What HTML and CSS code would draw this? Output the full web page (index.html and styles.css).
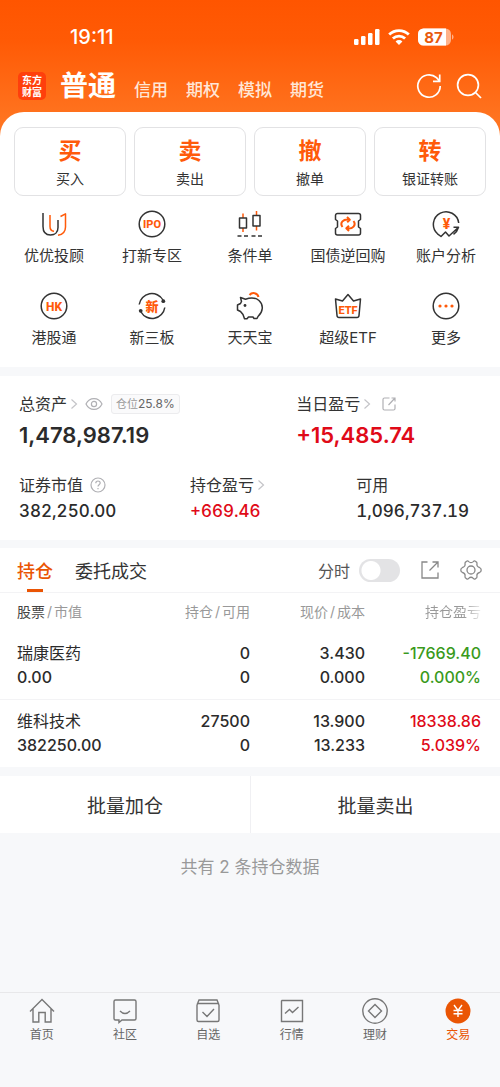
FILE: index.html
```html
<!DOCTYPE html>
<html lang="zh-CN">
<head>
<meta charset="utf-8">
<meta name="viewport" content="width=device-width, initial-scale=1">
<title>交易</title>
<link rel="stylesheet" href="styles.css">
</head>
<body>
<div class="app">
  <header class="top">
    <div class="status">
      <span class="status-time">19:11</span>
      <div class="status-icons">
        <svg width="26" height="18" viewBox="0 0 26 18" fill="#fff"><rect x="0" y="11" width="4.5" height="6" rx="1.2"/><rect x="7" y="8" width="4.5" height="9" rx="1.2"/><rect x="14" y="5" width="4.5" height="12" rx="1.2"/><rect x="21" y="1" width="4.5" height="16" rx="1.2"/></svg>
        <svg width="22" height="18" viewBox="0 0 22 18" fill="none" stroke="#fff" stroke-width="2.8"><path d="M1.2 6.6a14 14 0 0 1 19.6 0"/><path d="M4.9 10.6a8.8 8.8 0 0 1 12.2 0"/><path d="M11 17 7.6 13.5a4.8 4.8 0 0 1 6.8 0z" fill="#fff" stroke="none"/></svg>
        <svg class="battery" width="36" height="18" viewBox="0 0 36 18"><rect width="33" height="17" y=".5" rx="5.5" fill="#ffb28a"/><path d="M5.5.5H28v17H5.5A5.5 5.5 0 0 1 0 12V6A5.5 5.5 0 0 1 5.5.5z" fill="#fff"/><path d="M34 6.500c2 .6 2 4.400 0 5z" fill="#ffb28a"/><text x="15.500" y="14.500" text-anchor="middle" class="battery-text">87</text></svg>
      </div>
    </div>
    <div class="bar">
      <div class="logo"><span>东方</span><span>财富</span></div>
      <nav class="accounts">
        <a class="account account-on" href="#normal">普通</a>
        <a class="account" href="#credit">信用</a>
        <a class="account" href="#option">期权</a>
        <a class="account" href="#demo">模拟</a>
        <a class="account" href="#futures">期货</a>
      </nav>
      <button class="icon-btn" aria-label="刷新"><svg width="26" height="26" viewBox="0 0 26 26" fill="none" stroke="#fff" stroke-width="1.7"><path d="M24.200 13A11.200 11.200 0 1 1 20.500 4.700L23.500 8M23.700 1.500V8.300H17"/></svg></button>
      <button class="icon-btn" aria-label="搜索"><svg width="26" height="26" viewBox="0 0 26 26" fill="none" stroke="#fff" stroke-width="1.7"><circle cx="12" cy="12" r="10.400"/><path d="M19.500 19.500 25 25"/></svg></button>
    </div>
  </header>

  <main>
    <section class="panel">
      <div class="actions">
        <button class="action"><b>买</b><span>买入</span></button>
        <button class="action"><b>卖</b><span>卖出</span></button>
        <button class="action"><b>撤</b><span>撤单</span></button>
        <button class="action"><b>转</b><span>银证转账</span></button>
      </div>
      <div class="tools">
        <a class="tool" href="#advisor"><svg class="tool-icon" viewBox="0 0 28 28"><path class="dk" d="M3 3V16.500C3 22 6 25 10.500 25S18 22 18 17.500V10"/><path class="or" d="M10 5V16.500C10 19.500 11.500 21 14 21.300M20.500 6.500 25.500 3.800V17C25.500 21.500 22.500 24.500 18 25.300"/></svg>优优投顾</a>
        <a class="tool" href="#ipo"><svg class="tool-icon" viewBox="0 0 28 28"><circle class="dk" cx="14" cy="14" r="12.800"/><text class="glyph" x="14" y="18" font-size="11">IPO</text></svg>打新专区</a>
        <a class="tool" href="#condition"><svg class="tool-icon" viewBox="0 0 28 28"><path class="or" d="M7 3.500V8M7 18V22M20.500 1V6M20.500 16V20.500"/><rect class="dk" x="3.500" y="8" width="7" height="10"/><rect class="dk" x="17" y="5.500" width="7" height="10.500"/><path class="dk" d="M1.500 26h4M8 26h4M15.500 26h4M22 26h4"/></svg>条件单</a>
        <a class="tool" href="#repo"><svg class="tool-icon" viewBox="0 0 28 28"><path class="dk" d="M3.500 3.500H24.500A2 2 0 0 1 26.500 5.500V9.500L24.500 11V17L26.500 18.500V23A2 2 0 0 1 24.500 25H3.500A2 2 0 0 1 1.500 23V18.500L3.500 17V11L1.500 9.500V5.500A2 2 0 0 1 3.500 3.500z"/><path class="or thick" d="M8.500 17C5.500 13 9 8.500 15.500 9.700M13 7 15.800 9.700 13.200 12.200M19.500 11C22.500 15 19 19.500 12.500 18.300M15 21 12.300 18.300 15 15.800"/></svg>国债逆回购</a>
        <a class="tool" href="#analysis"><svg class="tool-icon" viewBox="0 0 28 28"><path class="dk" d="M26.700 13A12.700 12.700 0 1 0 5.500 23.800L9 26.500 13.500 22 17 26 26.500 17.300H21.500M26.500 17.300C25.800 20 24 22.500 21.500 24.300"/><text class="glyph" x="14.500" y="18.500" font-size="14">¥</text></svg>账户分析</a>
        <a class="tool" href="#hk"><svg class="tool-icon" viewBox="0 0 28 28"><circle class="dk" cx="14" cy="14" r="12.800"/><text class="glyph" x="14" y="18.500" font-size="12">HK</text></svg>港股通</a>
        <a class="tool" href="#neeq"><svg class="tool-icon" viewBox="0 0 28 28"><path class="dk" d="M1.200 12.500A12.800 12.800 0 0 1 25 8M26.800 15.500A12.800 12.800 0 0 1 3 20"/><circle cx="25.300" cy="9.200" r="1.900" fill="#333"/><circle cx="2.700" cy="18.800" r="1.900" fill="#333"/><text class="glyph" x="14" y="18.500" font-size="13">新</text></svg>新三板</a>
        <a class="tool" href="#daily"><svg class="tool-icon" viewBox="0 0 28 28"><path class="dk" d="M4.500 5.500 9.500 7.200C14 5.500 19.500 5.500 23 8.500 28 13 27 20 22 24.500L21 26.500H18L17 25H12.500L11 26.800H8.500L7 22.500 4.500 19.500 1.500 18V13L4.500 11.500 5.500 9.500z"/><path class="or thick" d="M13.500 3C16 0 21.500.5 22.500 5"/><circle cx="9" cy="13.500" r="1.400" fill="#333"/></svg>天天宝</a>
        <a class="tool" href="#etf"><svg class="tool-icon" viewBox="0 0 28 28"><path class="dk" d="M1.500 7 8.500 9 14 2.500 19.500 9 26.500 7 25 23.500Q24.800 25.500 23 25.500H5Q3.200 25.500 3 23.500z"/><text class="glyph" x="14" y="21.500" font-size="11">ETF</text></svg>超级ETF</a>
        <a class="tool" href="#more"><svg class="tool-icon" viewBox="0 0 28 28"><circle class="dk" cx="14" cy="14" r="12.800"/><g fill="#ff5a0a"><circle cx="8" cy="14" r="1.600"/><circle cx="14" cy="14" r="1.600"/><circle cx="20" cy="14" r="1.600"/></g></svg>更多</a>
      </div>
    </section>

    <section class="assets">
      <div class="asset-row asset-main">
        <div class="asset">
          <div class="asset-label">总资产<svg class="chev" viewBox="0 0 8 12"><path d="M1.500 1.500 6.500 6 1.500 10.500"/></svg>
            <button class="mini-btn eye" aria-label="隐藏资产"><svg width="18" height="14" viewBox="0 0 18 14"><path d="M1 7C4.500-.2 13.500-.2 17 7 13.500 14.200 4.500 14.200 1 7z"/><circle cx="9" cy="7" r="2.600"/></svg></button>
            <span class="badge">仓位<span class="badge-num">25.8%</span></span></div>
          <div class="num num-lg">1,478,987.19</div>
        </div>
        <div class="asset">
          <div class="asset-label">当日盈亏<svg class="chev" viewBox="0 0 8 12"><path d="M1.500 1.500 6.500 6 1.500 10.500"/></svg>
            <button class="mini-btn share" aria-label="分享"><svg width="14" height="14" viewBox="0 0 14 14"><path d="M7.500 1H2.500Q1 1 1 2.500V11.500Q1 13 2.500 13H11.500Q13 13 13 11.500V7.500M9.500 1H13V4.500M13 1 6.500 8"/></svg></button></div>
          <div class="num num-lg up">+15,485.74</div>
        </div>
      </div>
      <div class="asset-row asset-sub">
        <div class="asset">
          <div class="asset-label">证券市值
            <button class="mini-btn help" aria-label="说明"><svg width="16" height="16" viewBox="0 0 16 16"><circle cx="8" cy="8" r="7"/><path d="M5.800 6.200C5.800 3.300 10.200 3.300 10.200 6.100 10.200 7.800 8 7.800 8 9.600M8 11v1.200"/></svg></button></div>
          <div class="num num-md">382,250.00</div>
        </div>
        <div class="asset">
          <div class="asset-label">持仓盈亏<svg class="chev" viewBox="0 0 8 12"><path d="M1.500 1.500 6.500 6 1.500 10.500"/></svg></div>
          <div class="num num-md up">+669.46</div>
        </div>
        <div class="asset">
          <div class="asset-label">可用</div>
          <div class="num num-md">1,096,737.19</div>
        </div>
      </div>
    </section>

    <section class="holdings">
      <div class="tabs">
        <button class="tab tab-on">持仓</button>
        <button class="tab">委托成交</button>
        <label class="switch">分时<input type="checkbox"></label>
        <button class="icon-btn gray" aria-label="分享持仓"><svg width="20" height="20" viewBox="0 0 20 20"><path d="M7.500 2H2V18H18V12.500M12.500 2H18V7.500M18 2 9.500 10.500"/></svg></button>
        <button class="icon-btn gray" aria-label="设置"><svg width="22" height="22" viewBox="0 0 22 22"><path d="M6.500 2.300C7.500 1.600 8 1.800 8.700 2.600 10 3.900 12 3.900 13.300 2.600 14 1.800 14.500 1.600 15.500 2.300 17 3 17.200 3.500 17 4.500 16.600 6.500 17.500 8 19.500 8.500 21 9 21.200 9.500 21.200 11S21 13 19.500 13.500C17.500 14 16.600 15.500 17 17.500 17.200 18.500 17 19 15.500 19.700 14.500 20.400 14 20.200 13.300 19.400 12 18.100 10 18.100 8.700 19.400 8 20.200 7.500 20.400 6.500 19.700 5 19 4.800 18.500 5 17.500 5.400 15.500 4.500 14 2.500 13.500 1 13 .8 12.500.8 11S1 9 2.500 8.500C4.500 8 5.400 6.500 5 4.500 4.800 3.500 5 3 6.500 2.300z"/><circle cx="11" cy="11" r="4"/></svg></button>
      </div>
      <table class="grid">
        <thead>
          <tr><th><span class="strong">股票</span><i>/</i>市值</th><th>持仓<i>/</i>可用</th><th>现价<i>/</i>成本</th><th><span class="fade">持仓盈亏</span></th></tr>
        </thead>
        <tbody>
          <tr><td><span class="name">瑞康医药</span><br>0.00</td><td>0<br>0</td><td>3.430<br>0.000</td><td class="down">-17669.40<br>0.000%</td></tr>
          <tr><td><span class="name">维科技术</span><br>382250.00</td><td>27500<br>0</td><td>13.900<br>13.233</td><td class="up">18338.86<br>5.039%</td></tr>
        </tbody>
      </table>
    </section>

    <div class="batch">
      <button>批量加仓</button>
      <button>批量卖出</button>
    </div>
    <p class="total">共有 2 条持仓数据</p>
  </main>

  <nav class="bottom">
    <a href="#home"><svg viewBox="0 0 26 26"><path d="M1 13.500 13 1.500 25 13.500M4 11V24H9.800V14.500H16.200V24H22V11"/></svg>首页</a>
    <a href="#community"><svg viewBox="0 0 26 26"><path d="M3.500 2H22.500Q24 2 24 3.500V20.500Q24 22 22.500 22H10L7 24.500V22H3.500Q2 22 2 20.500V3.500Q2 2 3.500 2zM8 13Q13 18 18 13"/></svg>社区</a>
    <a href="#watch"><svg viewBox="0 0 26 26"><path d="M2 7 4 2H22L24 7M3.500 5.500H22.500Q24 5.500 24 7V22Q24 23.500 22.500 23.500H3.500Q2 23.500 2 22V7Q2 5.500 3.500 5.500zM7.500 14 12 18.500 19 11"/></svg>自选</a>
    <a href="#market"><svg viewBox="0 0 26 26"><path d="M3 2.500H23.500V23.500H2.500V3zM6 15.500 10.500 11.500 13.500 14.500 19.500 9"/></svg>行情</a>
    <a href="#wealth"><svg viewBox="0 0 26 26"><circle cx="13" cy="13" r="12.200"/><path d="M13 6.500 19.500 13 13 19.500 6.500 13z"/></svg>理财</a>
    <a class="on" href="#trade"><svg viewBox="0 0 26 26"><circle cx="13" cy="13" r="12.500" fill="#ea5504" stroke="none"/><path stroke="#fff" d="M9 7 13 12.500 17 7M13 12.500V19M8.500 12.500H17.500M8.500 15.800H17.500"/></svg>交易</a>
  </nav>
</div>
</body>
</html>
```

FILE: styles.css
```css
* { box-sizing: border-box; }

body {
  margin: 0;
  background: #f7f8fa;
  color: #333;
  font-family: Inter, "Noto Sans CJK SC", sans-serif;
}

button {
  padding: 0;
  border: 0;
  background: none;
  color: inherit;
  font: inherit;
}

a { color: inherit; text-decoration: none; }
svg { display: block; flex: none; }

.app {
  display: flex;
  flex-direction: column;
  min-height: 100vh;
}

.top {
  height: 140px;
  padding-top: 24px;
  background: linear-gradient(#ff5500 0, #ff5a05 40px, #ff7420 120px);
  color: #fff;
}

.status {
  display: flex;
  align-items: center;
  justify-content: space-between;
  height: 26px;
  padding: 0 46px 0 70px;
}

.status-time { font-size: 20px; font-weight: 500; }
.status-icons { display: flex; align-items: center; gap: 8px; }
.battery-text { font-size: 15px; font-weight: 700; fill: #e8590c; }

.bar {
  display: flex;
  align-items: center;
  height: 60px;
  padding: 12px 18px 0;
}

.logo {
  display: flex;
  flex-direction: column;
  align-items: center;
  justify-content: center;
  width: 28px;
  height: 28px;
  border-radius: 5px;
  background: #ff3f0c;
  font-size: 10px;
  font-weight: 700;
  line-height: 12px;
}

.accounts {
  display: flex;
  flex: 1;
  align-items: baseline;
  gap: 18px;
  padding-left: 14px;
}

.account { color: #ffe6d6; font-size: 17px; font-weight: 500; }
.account-on { color: #fff; font-size: 28px; font-weight: 700; line-height: 40px; }

.icon-btn { display: flex; margin-left: 14px; }

.panel {
  margin-top: -28px;
  padding: 15px 0 19px;
  border-radius: 24px 24px 0 0;
  background: #fff;
}

.actions {
  display: grid;
  grid-template-columns: repeat(4, 1fr);
  gap: 8px;
  padding: 0 14px;
}

.action {
  display: flex;
  flex-direction: column;
  align-items: center;
  height: 69px;
  padding-top: 7px;
  border: 1px solid #e2e2e4;
  border-radius: 9px;
  font-size: 14px;
  line-height: 24px;
}

.action b { color: #ff5a0a; font-size: 23px; font-weight: 700; line-height: 32px; }

.tools {
  display: grid;
  grid-template-columns: repeat(5, 1fr);
  row-gap: 26px;
  padding: 14px 5px 0;
}

.tool {
  display: flex;
  flex-direction: column;
  align-items: center;
  gap: 8px;
  font-size: 15px;
  line-height: 20px;
}

.tool-icon { width: 28px; height: 28px; }
.dk, .or { fill: none; stroke: #333; stroke-width: 1.5; stroke-linejoin: round; }
.or { stroke: #ff5a0a; }
.thick { stroke-width: 2; }
.glyph { fill: #ff5a0a; font-weight: 800; font-family: Roboto, "Noto Sans CJK SC", sans-serif; text-anchor: middle; }

.assets {
  margin-top: 9px;
  padding: 16px 19px 15px;
  background: #fff;
}

.asset-row { display: grid; }
.asset-main { grid-template-columns: 60% 40%; }
.asset-sub { grid-template-columns: 37% 36% 27%; margin-top: 19px; }

.asset-label {
  display: flex;
  align-items: center;
  height: 24px;
  font-size: 16px;
  line-height: 24px;
  white-space: nowrap;
}

.chev { width: 8px; height: 12px; margin-left: 3px; fill: none; stroke: #c4c4c8; stroke-width: 1.2; }
.mini-btn { display: flex; margin-left: 7px; fill: none; stroke: #b0b0b4; stroke-width: 1.2; }
.share { margin-left: 11px; }

.badge {
  display: flex;
  align-items: center;
  height: 20px;
  margin-left: 8px;
  padding: 0 4px;
  border: 1px solid #ececee;
  border-radius: 3px;
  background: #fafafb;
  color: #999;
  font-size: 11px;
}

.badge-num { color: #666; font-size: 12px; }

.num { color: #2b2b2b; white-space: nowrap; }
.num-lg { font-size: 22px; font-weight: 600; line-height: 38px; }
.num-md { font-size: 17px; font-weight: 500; line-height: 28px; font-variant-numeric: tabular-nums; }
.up.up { color: #e00a18; }
.down.down { color: #3a9a1c; }

.holdings { margin-top: 8px; background: #fff; }

.tabs {
  display: flex;
  align-items: center;
  height: 45px;
  padding: 0 18px 0 17px;
  border-bottom: 1px solid #f3f3f5;
  font-size: 18px;
}

.tab { height: 44px; margin-right: 22px; }

.tab-on {
  background: linear-gradient(#ea5504, #ea5504) center bottom / 16px 3px no-repeat;
  color: #ea5504;
  font-weight: 500;
}

.switch {
  display: flex;
  align-items: center;
  gap: 9px;
  margin-left: auto;
  margin-right: 6px;
  color: #555;
  font-size: 16px;
}

.switch input {
  appearance: none;
  width: 41px;
  height: 23px;
  margin: 0;
  border-radius: 12px;
  background: radial-gradient(circle at 12px 50%, #fff 9px, #e3e3e5 10px);
}

.switch input:checked { background: radial-gradient(circle at 29px 50%, #fff 9px, #ea5504 10px); }
.gray { fill: none; stroke: #888; stroke-width: 1.3; }
.gray + .gray { margin-left: 20px; }

.grid { width: 100%; border-collapse: collapse; table-layout: fixed; }
.grid th, .grid td { padding: 0; text-align: right; white-space: nowrap; }
.grid th { width: 23%; height: 38px; padding-bottom: 3px; color: #999; font-size: 14px; font-weight: 400; }
.grid th:first-child, .grid th:last-child { width: 27%; }
.grid th:first-child, .grid td:first-child { padding-left: 17px; text-align: left; }
.grid th:last-child, .grid td:last-child { padding-right: 19px; }
.grid th i { padding: 0 2px; font-style: normal; }
.grid td { height: 68px; color: #2b2b2b; font-size: 16px; font-weight: 500; line-height: 24px; }
.grid tbody tr + tr { border-top: 1px solid #f3f3f5; }
.name { font-weight: 400; }
.strong { color: #444; }

.fade {
  background: linear-gradient(90deg, #999 70%, #eee);
  background-clip: text;
  color: transparent;
}

.batch { display: grid; grid-template-columns: 1fr 1fr; margin-top: 9px; background: #fff; }
.batch button { height: 57px; font-size: 19px; }
.batch button + button { border-left: 1px solid #f0f0f3; }

.total { margin: 20px 0; color: #999; font-size: 17px; line-height: 28px; text-align: center; }

.bottom {
  display: grid;
  grid-template-columns: repeat(6, 1fr);
  height: 95px;
  margin-top: auto;
  padding-top: 5px;
  border-top: 1px solid #e8e8ea;
}

.bottom a {
  display: flex;
  flex-direction: column;
  align-items: center;
  gap: 2px;
  color: #666;
  font-size: 12px;
  line-height: 18px;
}

.bottom svg { width: 26px; height: 26px; fill: none; stroke: #777; stroke-width: 1.4; }
.bottom .on { color: #ea5504; }
```
